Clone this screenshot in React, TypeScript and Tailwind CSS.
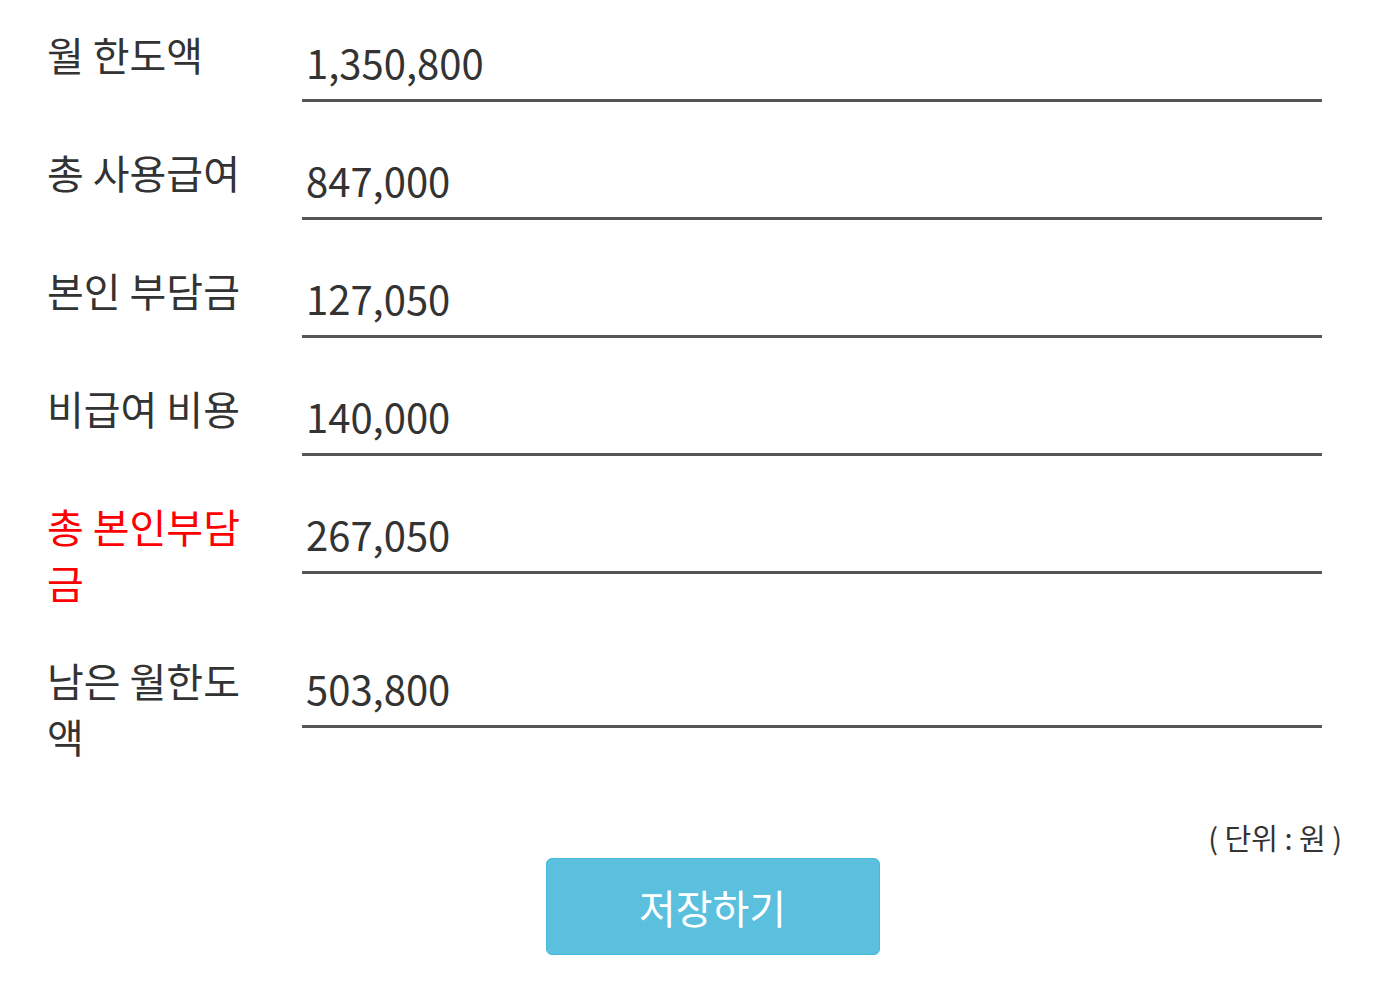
import React from "react";

const rows: { label: string; value: string; red?: boolean }[] = [
  { label: "월 한도액", value: "1,350,800" },
  { label: "총 사용급여", value: "847,000" },
  { label: "본인 부담금", value: "127,050" },
  { label: "비급여 비용", value: "140,000" },
  { label: "총 본인부담금", value: "267,050", red: true },
  { label: "남은 월한도액", value: "503,800" },
];

export default function App() {
  return (
    <div
      className="min-h-[982px] w-full bg-white pl-[47px] pt-[26px] text-[#333]"
      style={{ fontFamily: '"Noto Sans CJK KR", "Noto Sans", sans-serif' }}
    >
      {rows.map((r) => (
        <div key={r.label} className="mb-[42px] flex items-start">
          <div
            className={
              "w-[255px] shrink-0 pr-[40px] text-[40px] leading-[56px] " +
              (r.red ? "text-[#ff0000]" : "text-[#333]")
            }
          >
            {r.label}
          </div>
          <div className="mr-[55px] flex-1 border-b-[3px] border-[#555] pb-[9px] pl-[4px] pt-[8px] text-[40px] leading-[56px] text-[#333]">
            {r.value}
          </div>
        </div>
      ))}
      <div className="pt-[11px] pr-[35px] text-right text-[29px] leading-[41px] text-[#333]">
        ( 단위 : 원 )
      </div>
      <div className="flex justify-center pl-[1px]">
        <button className="h-[97px] w-[334px] rounded-[6px] border border-[#46b8da] bg-[#5bc0de] text-[40px] text-white">
          저장하기
        </button>
      </div>
    </div>
  );
}
